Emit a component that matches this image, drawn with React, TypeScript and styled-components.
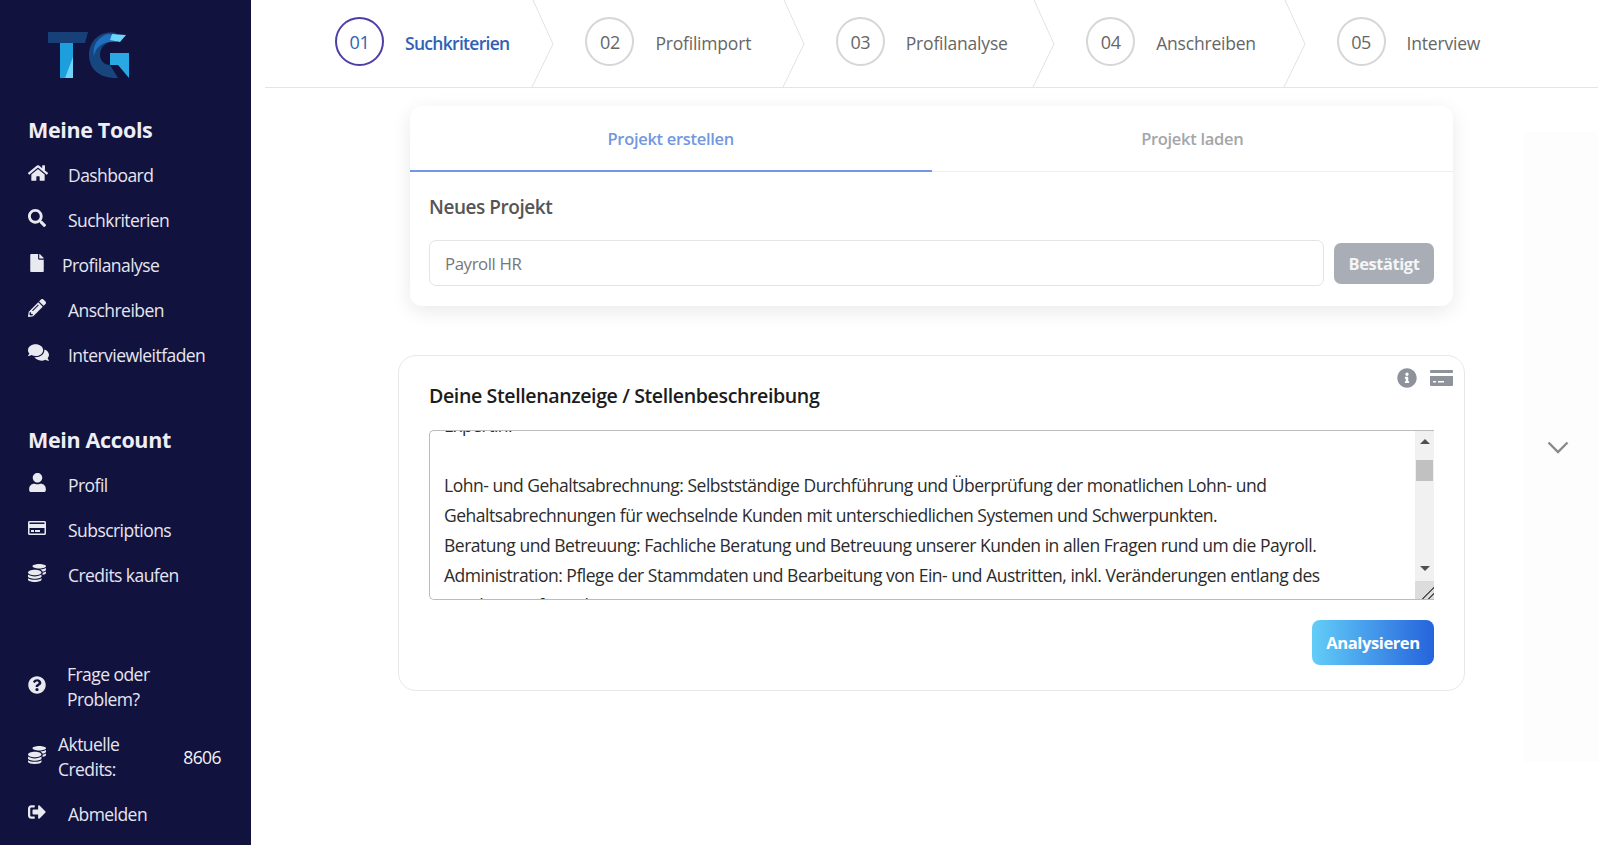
import React from "react";
import styled, { createGlobalStyle } from "styled-components";
import {
  FaHome,
  FaSearch,
  FaFile,
  FaPencilAlt,
  FaComments,
  FaUser,
  FaRegCreditCard,
  FaCoins,
  FaQuestionCircle,
  FaSignOutAlt,
  FaInfoCircle,
} from "react-icons/fa";

const GlobalStyle = createGlobalStyle`
  html, body {
    margin: 0;
    padding: 0;
    background: #fff;
  }
  * {
    box-sizing: border-box;
  }
  body {
    font-family: "Open Sans", "Noto Sans", sans-serif;
  }
`;

const Page = styled.div`
  display: flex;
  width: 100%;
  height: 845px;
  overflow: hidden;
`;

const Sidebar = styled.aside`
  width: 251px;
  flex: none;
  display: flex;
  flex-direction: column;
  background: #12123f;
  color: #e9e9f2;
  padding: 32px 0 0 28px;
`;

const LogoWrap = styled.div`
  height: 48px;
  margin-left: 2px;
  margin-bottom: 35px;
`;

const SectionTitle = styled.h2`
  margin: 0;
  height: 30px;
  font-size: 21.5px;
  line-height: 30px;
  font-weight: 700;
  letter-spacing: -0.35px;
  color: #eeeef5;
`;

const NavList = styled.nav`
  display: flex;
  flex-direction: column;
  margin-top: 7px;
`;

const NavItem = styled.a`
  display: flex;
  align-items: center;
  height: 45px;
  font-size: 17.5px;
  letter-spacing: -0.55px;
  color: #e6e6f0;
`;

const NavIcon = styled.span<{ $width?: number; $size?: number }>`
  display: flex;
  align-items: center;
  flex: none;
  width: ${(p) => p.$width ?? 40}px;
  margin-top: -4px;
  font-size: ${(p) => p.$size ?? 18}px;
  color: #e9e9f0;
`;

const AccountBlock = styled.div`
  margin-top: 48px;
`;

const FooterBlock = styled.div`
  margin-top: 65px;
`;

const TwoLineRow = styled.div<{ $below: number }>`
  display: flex;
  align-items: center;
  height: 50px;
  margin-bottom: ${(p) => p.$below}px;
  font-size: 17.5px;
  line-height: 25px;
  letter-spacing: -0.55px;
  color: #e6e6f0;
`;

const CreditValue = styled.span`
  margin-left: auto;
  margin-right: 30px;
  color: #f2f2f7;
`;

const Main = styled.main`
  flex: 1;
  min-width: 0;
  display: flex;
  flex-direction: column;
  padding-left: 14px;
`;

const StepBar = styled.div`
  display: flex;
  height: 88px;
  flex: none;
  padding-left: 38px;
  border-bottom: 1px solid #e4e4e4;
`;

const Step = styled.div`
  position: relative;
  display: flex;
  align-items: center;
  width: 250.4px;
  flex: none;
  padding-left: 32px;
`;

const StepCircle = styled.div<{ $active?: boolean }>`
  display: flex;
  align-items: center;
  justify-content: center;
  width: 49px;
  height: 49px;
  flex: none;
  margin-top: -4px;
  padding-top: 1px;
  border-radius: 50%;
  border: 2px solid ${(p) => (p.$active ? "#4d3fa8" : "#d6d6d6")};
  font-size: 18px;
  letter-spacing: -0.4px;
  color: ${(p) => (p.$active ? "#2f62b5" : "#666")};
`;

const StepLabel = styled.div<{ $active?: boolean }>`
  margin-left: 21px;
  margin-top: -2px;
  font-size: 17.5px;
  font-weight: ${(p) => (p.$active ? 600 : 500)};
  letter-spacing: ${(p) => (p.$active ? -0.7 : -0.2)}px;
  color: ${(p) => (p.$active ? "#2f62b5" : "#666")};
`;

const StepArrow = styled.svg`
  position: absolute;
  top: 0;
  right: -2px;
  width: 24px;
  height: 87px;
`;

const Body = styled.div`
  flex: 1;
  display: flex;
  padding-left: 133px;
`;

const Content = styled.div`
  width: 1067px;
  flex: none;
  padding-top: 18px;
`;

const ProjectCard = styled.section`
  margin: 0 12px;
  height: 200px;
  border-radius: 12px;
  background: #fff;
  box-shadow: 0 5px 20px rgba(0, 0, 0, 0.09);
`;

const Tabs = styled.div`
  display: flex;
  height: 66px;
  border-bottom: 1px solid #efefef;
`;

const Tab = styled.div<{ $active?: boolean }>`
  width: 50%;
  display: flex;
  align-items: center;
  justify-content: center;
  margin-bottom: -1px;
  padding-top: 1px;
  font-size: 16.5px;
  font-weight: 600;
  letter-spacing: -0.3px;
  color: ${(p) => (p.$active ? "#7397e0" : "#a3a6ab")};
  border-bottom: 2px solid ${(p) => (p.$active ? "#7397e0" : "transparent")};
`;

const ProjectBody = styled.div`
  padding: 21px 19px 0 19px;
`;

const ProjectTitle = styled.h3`
  margin: 0;
  height: 28px;
  font-size: 19px;
  line-height: 28px;
  font-weight: 600;
  letter-spacing: -0.45px;
  color: #555;
`;

const ProjectRow = styled.div`
  display: flex;
  align-items: center;
  margin-top: 19px;
  gap: 10px;
`;

const NameInput = styled.div`
  flex: 1;
  height: 46px;
  display: flex;
  align-items: center;
  padding-left: 15px;
  border: 1px solid #e4e4e4;
  border-radius: 7px;
  font-size: 16.8px;
  letter-spacing: -0.4px;
  color: #777;
`;

const ConfirmButton = styled.button`
  width: 100px;
  height: 41px;
  border: 0;
  border-radius: 7px;
  background: #a9adb6;
  color: #f4f5f7;
  font-family: inherit;
  font-size: 16.5px;
  font-weight: 700;
  letter-spacing: -0.45px;
`;

const JobCard = styled.section`
  position: relative;
  height: 336px;
  margin-top: 49px;
  padding: 0 30px;
  border: 1px solid #e8e8e8;
  border-radius: 18px;
  background: #fff;
`;

const CardTools = styled.div`
  position: absolute;
  top: 12px;
  right: 11px;
  display: flex;
  align-items: center;
  gap: 13px;
  color: #8d929b;
  font-size: 20px;

  svg {
    display: block;
  }
`;

const JobTitle = styled.h3`
  margin: 0;
  padding-top: 25px;
  height: 74px;
  font-size: 19.6px;
  line-height: 30px;
  font-weight: 600;
  letter-spacing: -0.4px;
  color: #1c1c1c;
`;

const TextBox = styled.div`
  display: flex;
  height: 170px;
  overflow: hidden;
  border: 1px solid #bcbcbc;
  border-right: 0;
  border-radius: 5px 0 0 5px;
`;

const TextView = styled.div`
  flex: 1;
  min-width: 0;
  overflow: hidden;
`;

const TextLines = styled.div`
  margin-top: -21px;
  padding: 0 14px;
  white-space: pre;
  font-size: 17.5px;
  line-height: 30px;
  letter-spacing: -0.48px;
  color: #2b2b2b;
`;

const ScrollRail = styled.div`
  width: 19px;
  flex: none;
  display: flex;
  flex-direction: column;
  background: #f1f1f1;
`;

const RailButton = styled.div<{ $down?: boolean }>`
  height: 18px;
  flex: none;
  display: flex;
  align-items: flex-start;
  justify-content: center;
  padding-top: ${(p) => (p.$down ? 3 : 8)}px;

  &::before {
    content: "";
    border-left: 5px solid transparent;
    border-right: 5px solid transparent;
    ${(p) => (p.$down ? "border-top: 5px solid #505050;" : "border-bottom: 5px solid #505050;")}
  }
`;

const RailTrack = styled.div`
  flex: 1;
  padding: 11px 1px 0;
`;

const RailThumb = styled.div`
  height: 21px;
  background: #c1c1c1;
`;

const RailCorner = styled.div`
  height: 18px;
  flex: none;
  background: linear-gradient(
      135deg,
      transparent 66%,
      #555 66% 71%,
      transparent 71% 82%,
      #555 82% 87%,
      transparent 87%
    ),
    #dcdcdc;
`;

const ActionRow = styled.div`
  display: flex;
  justify-content: flex-end;
  margin-top: 20px;
`;

const AnalyzeButton = styled.button`
  width: 122px;
  height: 45px;
  border: 0;
  border-radius: 8px;
  background: linear-gradient(90deg, #63cdf8, #2563dc);
  color: #fff;
  font-family: inherit;
  font-size: 16.6px;
  font-weight: 700;
  letter-spacing: -0.45px;
`;

const SidePanel = styled.div`
  width: 75px;
  height: 630px;
  margin-top: 44px;
  margin-left: 58px;
  flex: none;
  display: flex;
  align-items: center;
  justify-content: center;
  padding-right: 6px;
  background: #fdfdfd;
`;

const Logo = () => (
  <svg width="120" height="60" viewBox="0 0 120 60">
    <polygon points="18,0 58,0 55,11 18,11" fill="#173f78" />
    <polygon points="30,11 43,11 43,46 30,46" fill="#1c9fdc" />
    <polygon points="43,25 43,46 35,46" fill="#6ed4fa" />
    <path d="M86 1C70-2 59 9 59 23C59 37 70 47 88 46L80 33C74 33 70 28 70 23C70 15 76 9 86 9Z" fill="#17467f" />
    <path d="M78 2C68 5 62 13 64 24C66 14 74 9 86 10L92 4Z" fill="#1f70c0" />
    <polygon points="82,2 96,3 90,10 80,8" fill="#6ed4fa" />
    <polygon points="80,21 99,21 99,46 88,33 80,33" fill="#2aa8e3" />
  </svg>
);

const CardIcon = () => (
  <svg width="23" height="16" viewBox="0 0 23 16" fill="currentColor">
    <rect width="23" height="3" rx="1" />
    <path
      fillRule="evenodd"
      d="M0 6h23v9a1 1 0 0 1-1 1H1a1 1 0 0 1-1-1ZM3 11v1.5h3V11ZM8 11v1.5h6V11Z"
    />
  </svg>
);

const tools = [
  { label: "Dashboard", icon: <FaHome />, size: 20 },
  { label: "Suchkriterien", icon: <FaSearch /> },
  { label: "Profilanalyse", icon: <FaFile />, width: 34 },
  { label: "Anschreiben", icon: <FaPencilAlt /> },
  { label: "Interviewleitfaden", icon: <FaComments />, size: 21 },
];

const account = [
  { label: "Profil", icon: <FaUser />, size: 19 },
  { label: "Subscriptions", icon: <FaRegCreditCard /> },
  { label: "Credits kaufen", icon: <FaCoins /> },
];

const steps = ["Suchkriterien", "Profilimport", "Profilanalyse", "Anschreiben", "Interview"];

const jobText = [
  "Expertin:",
  "",
  "Lohn- und Gehaltsabrechnung: Selbstständige Durchführung und Überprüfung der monatlichen Lohn- und",
  "Gehaltsabrechnungen für wechselnde Kunden mit unterschiedlichen Systemen und Schwerpunkten.",
  "Beratung und Betreuung: Fachliche Beratung und Betreuung unserer Kunden in allen Fragen rund um die Payroll.",
  "Administration: Pflege der Stammdaten und Bearbeitung von Ein- und Austritten, inkl. Veränderungen entlang des",
  "Employee-Life-Cycle.",
].join("\n");

export default function App() {
  return (
    <>
      <GlobalStyle />
      <Page>
        <Sidebar>
          <LogoWrap>
            <Logo />
          </LogoWrap>
          <SectionTitle>Meine Tools</SectionTitle>
          <NavList>
            {tools.map((t) => (
              <NavItem key={t.label}>
                <NavIcon $width={t.width} $size={t.size}>
                  {t.icon}
                </NavIcon>
                {t.label}
              </NavItem>
            ))}
          </NavList>
          <AccountBlock>
            <SectionTitle>Mein Account</SectionTitle>
            <NavList>
              {account.map((t) => (
                <NavItem key={t.label}>
                  <NavIcon $size={t.size}>{t.icon}</NavIcon>
                  {t.label}
                </NavItem>
              ))}
            </NavList>
          </AccountBlock>
          <FooterBlock>
            <TwoLineRow $below={20}>
              <NavIcon $width={39}>
                <FaQuestionCircle />
              </NavIcon>
              <div>
                Frage oder
                <br />
                Problem?
              </div>
            </TwoLineRow>
            <TwoLineRow $below={9}>
              <NavIcon $width={30}>
                <FaCoins />
              </NavIcon>
              <div>
                Aktuelle
                <br />
                Credits:
              </div>
              <CreditValue>8606</CreditValue>
            </TwoLineRow>
            <NavItem>
              <NavIcon>
                <FaSignOutAlt />
              </NavIcon>
              Abmelden
            </NavItem>
          </FooterBlock>
        </Sidebar>
        <Main>
          <StepBar>
            {steps.map((s, i) => (
              <Step key={s}>
                <StepCircle $active={i === 0}>0{i + 1}</StepCircle>
                <StepLabel $active={i === 0}>{s}</StepLabel>
                {i < 4 && (
                  <StepArrow viewBox="0 0 24 87" preserveAspectRatio="none">
                    <polyline points="2,0 22,44 1,87" fill="none" stroke="#e2e2e2" strokeWidth="1" />
                  </StepArrow>
                )}
              </Step>
            ))}
          </StepBar>
          <Body>
            <Content>
              <ProjectCard>
                <Tabs>
                  <Tab $active>Projekt erstellen</Tab>
                  <Tab>Projekt laden</Tab>
                </Tabs>
                <ProjectBody>
                  <ProjectTitle>Neues Projekt</ProjectTitle>
                  <ProjectRow>
                    <NameInput>Payroll HR</NameInput>
                    <ConfirmButton>Bestätigt</ConfirmButton>
                  </ProjectRow>
                </ProjectBody>
              </ProjectCard>
              <JobCard>
                <CardTools>
                  <FaInfoCircle />
                  <CardIcon />
                </CardTools>
                <JobTitle>Deine Stellenanzeige / Stellenbeschreibung</JobTitle>
                <TextBox>
                  <TextView>
                    <TextLines>{jobText}</TextLines>
                  </TextView>
                  <ScrollRail>
                    <RailButton />
                    <RailTrack>
                      <RailThumb />
                    </RailTrack>
                    <RailButton $down />
                    <RailCorner />
                  </ScrollRail>
                </TextBox>
                <ActionRow>
                  <AnalyzeButton>Analysieren</AnalyzeButton>
                </ActionRow>
              </JobCard>
            </Content>
            <SidePanel>
              <svg width="22" height="13" viewBox="0 0 22 13">
                <polyline points="1.5,1.5 11,11 20.5,1.5" fill="none" stroke="#8a8a8a" strokeWidth="2.4" />
              </svg>
            </SidePanel>
          </Body>
        </Main>
      </Page>
    </>
  );
}
